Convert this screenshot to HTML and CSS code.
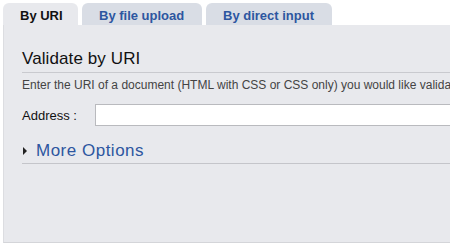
FILE: index.html
```html
<!DOCTYPE html>
<html lang="en">
<head>
<meta charset="UTF-8" />
<title>Validate by URI</title>
<link rel="stylesheet" href="styles.css">
</head>
<body>

<div class="tabs">
  <div class="tab active">By URI</div>
  <div class="tab">By file upload</div>
  <div class="tab">By direct input</div>
</div>

<div class="panel">
  <h2>Validate by URI</h2>
  <p class="intro">Enter the URI of a document (HTML with CSS or CSS only) you would like validate:</p>
  <div class="field">
    <label for="uri">Address :</label>
    <input id="uri" type="text">
  </div>
  <div class="more">
    <span class="arrow"></span>
    <span>More Options</span>
  </div>
</div>

</body>
</html>
```

FILE: styles.css
```css
/* page */
body {
  margin: 0;
  padding: 3px 0 0 3px;
  background: #fff;
  font-family: "Liberation Sans", Arial, sans-serif;
  overflow: hidden;
  width: 460px;
}

/* tabs */
.tabs {
  display: flex;
  gap: 4px;
  height: 22px;
}
.tab {
  background: #d9dde5;
  color: #2d56a0;
  font-weight: bold;
  font-size: 13px;
  line-height: 25px;
  padding: 0 0 0 17px;
  border-radius: 6px 6px 0 0;
  white-space: nowrap;
}
.tab:nth-child(1) { width: 58px; }
.tab:nth-child(2) { width: 103px; }
.tab:nth-child(3) { width: 109px; }
.tab.active {
  background: #e8e9ed;
  color: #111;
}

/* panel */
.panel {
  background: #e8e9ed;
  height: 218px;
  border-left: 1px solid #dcdde1;
  border-bottom: 1px solid #d4d5d9;
  padding: 24px 0 0 18px;
  box-sizing: border-box;
}
.panel h2 {
  margin: 0;
  font-weight: normal;
  font-size: 17px;
  color: #111;
  letter-spacing: 0.1px;
  padding-bottom: 3px;
  border-bottom: 1px solid #c9cacf;
}
.intro {
  margin: 5px 0 0;
  font-size: 12px;
  color: #444;
  white-space: nowrap;
}
.field {
  display: flex;
  align-items: center;
  margin-top: 12px;
}
.field label {
  font-size: 13px;
  color: #111;
  width: 73px;
}
.field input {
  flex: 1;
  height: 22px;
  box-sizing: border-box;
  border: 1px solid #b9babe;
  background: #fff;
  margin: 0;
}
.more {
  display: flex;
  align-items: center;
  margin-top: 15px;
  padding-bottom: 2px;
  border-bottom: 1px solid #c4c5ca;
  color: #2d56a0;
  font-size: 17px;
  letter-spacing: 0.5px;
}
.arrow {
  width: 0;
  height: 0;
  border-left: 4px solid #222;
  border-top: 4px solid transparent;
  border-bottom: 4px solid transparent;
  margin: 0 9px 0 1px;
}
```
